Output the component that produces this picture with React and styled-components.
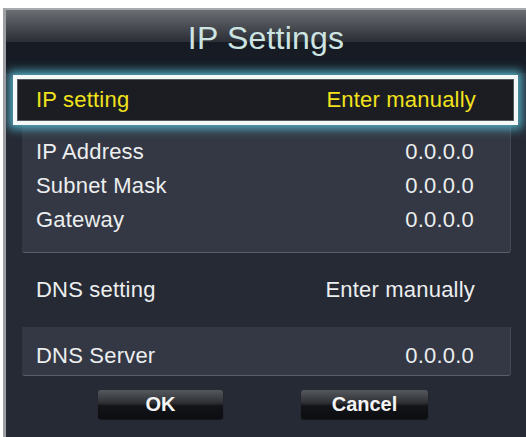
import styled, { createGlobalStyle } from "styled-components";

const GlobalStyle = createGlobalStyle`
  html, body {
    margin: 0;
    padding: 0;
    background: #ffffff;
  }
  body {
    font-family: "Liberation Sans", Arial, sans-serif;
  }
`;

const Dialog = styled.div`
  margin: 8px 0 0 3px;
  width: 520px;
  height: 427px;
  border-left: 3px solid #9d9fa3;
  border-top: 2px solid #a7a9ac;
  background: #262a35;
  overflow: hidden;
  display: flex;
  flex-direction: column;
`;

const Header = styled.div`
  height: 63px;
  display: flex;
  align-items: flex-start;
  justify-content: center;
  background: linear-gradient(
    180deg,
    #6b6e73 0%,
    #4a4d53 25%,
    #2c2f35 50%,
    #151a23 51%,
    #181d26 100%
  );
`;

const Title = styled.h1`
  margin: 10px 0 0;
  font-size: 32px;
  font-weight: 400;
  color: #cde4e2;
  letter-spacing: 0.2px;
`;

const Body = styled.div`
  display: flex;
  flex-direction: column;
  padding: 2px 0 0 0;
`;

const Selected = styled.div`
  margin-left: 7px;
  width: 505px;
  height: 50px;
  box-sizing: border-box;
  border: 4px solid #f4f8f8;
  background: #1b1d23;
  box-shadow: 0 0 9px 4px rgba(90, 200, 222, 0.8),
    inset 0 0 0 1px #55585d;
  display: flex;
  align-items: center;
  justify-content: space-between;
  padding: 0 38px 0 19px;
  position: relative;
  z-index: 1;
`;

const Group = styled.div`
  margin-left: 16px;
  width: 489px;
  box-sizing: border-box;
  background: #343844;
  border-bottom: 1px solid #5a5e68;
  border-right: 1px solid #444853;
  border-radius: 0 0 3px 3px;
  padding: ${(p) => p.$pad};
  display: flex;
  flex-direction: column;
`;

const Row = styled.div`
  display: flex;
  align-items: center;
  justify-content: space-between;
  height: ${(p) => p.$h || 34}px;
  padding-right: ${(p) => p.$pr || 36}px;
  padding-left: ${(p) => p.$pl || 14}px;
`;

const Label = styled.span`
  font-size: 22px;
  color: ${(p) => (p.$active ? "#f2e21c" : "#eceeef")};
  letter-spacing: 0.2px;
`;

const Buttons = styled.div`
  display: flex;
  justify-content: center;
  gap: 78px;
  padding-top: 14px;
  padding-right: 6px;
`;

const Button = styled.button`
  width: ${(p) => p.$w}px;
  height: 29px;
  border: none;
  border-radius: 3px;
  background: linear-gradient(180deg, #55585d 0%, #2d2f33 45%, #131417 55%, #0c0d10 100%);
  box-shadow: 0 1px 1px rgba(0, 0, 0, 0.5);
  color: #f4f4f4;
  font-family: "Liberation Sans", Arial, sans-serif;
  font-size: 20px;
  font-weight: 700;
  padding: 0;
`;

export default function App() {
  return (
    <>
      <GlobalStyle />
      <Dialog>
        <Header>
          <Title>IP Settings</Title>
        </Header>
        <Body>
          <Selected>
            <Label $active>IP setting</Label>
            <Label $active>Enter manually</Label>
          </Selected>
          <Group $pad="10px 0 15px">
            <Row>
              <Label>IP Address</Label>
              <Label>0.0.0.0</Label>
            </Row>
            <Row>
              <Label>Subnet Mask</Label>
              <Label>0.0.0.0</Label>
            </Row>
            <Row>
              <Label>Gateway</Label>
              <Label>0.0.0.0</Label>
            </Row>
          </Group>
          <Row $h={74} $pl={30} $pr={51}>
            <Label>DNS setting</Label>
            <Label>Enter manually</Label>
          </Row>
          <Group $pad="12px 0 2px">
            <Row>
              <Label>DNS Server</Label>
              <Label>0.0.0.0</Label>
            </Row>
          </Group>
          <Buttons>
            <Button $w={125}>OK</Button>
            <Button $w={127}>Cancel</Button>
          </Buttons>
        </Body>
      </Dialog>
    </>
  );
}
